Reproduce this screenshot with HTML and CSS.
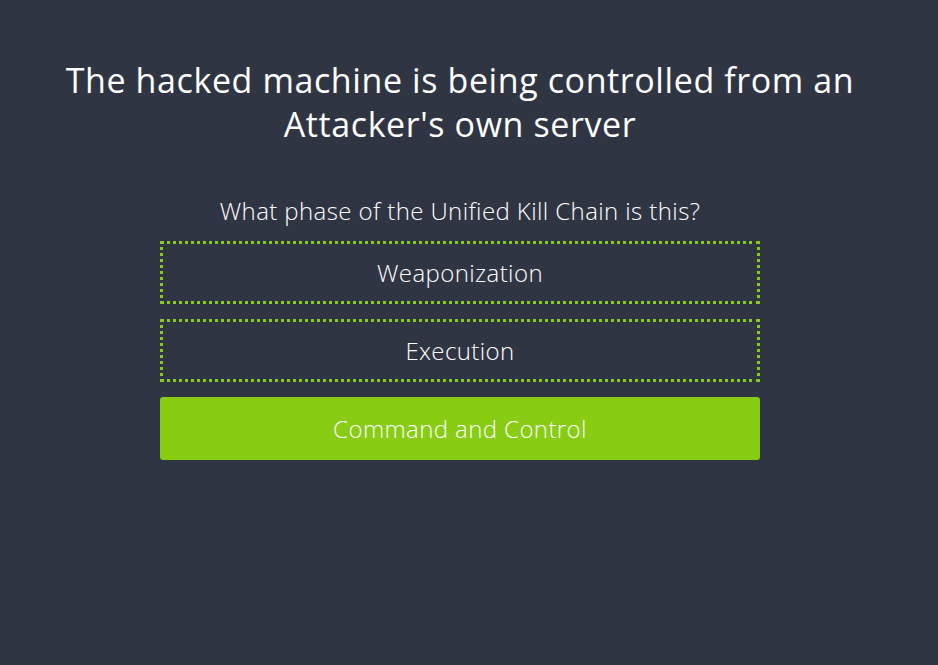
FILE: index.html
```html
<!DOCTYPE html>
<html lang="en">
    <head>
        <meta charset="UTF-8" />
        <title>Unified Kill Chain</title>
        <link rel="stylesheet" href="styles.css">
    </head>
    <body>
        <div class="page">
            <!-- Сценарий -->
            <h1 class="scenario">The hacked machine is being controlled from an Attacker's own server</h1>

            <!-- Вопрос и варианты -->
            <div class="quiz">
                <p class="question">What phase of the Unified Kill Chain is this?</p>
                <button class="answer">Weaponization</button>
                <button class="answer">Execution</button>
                <button class="answer selected">Command and Control</button>
            </div>
        </div>
    </body>
</html>
```

FILE: styles.css
```css
* {
    margin: 0;
    padding: 0;
    box-sizing: border-box;
    font-family: 'Open Sans', sans-serif;
}

body {
    background-color: #303544;
    color: white;
}

.page {
    width: 920px;
    min-height: 665px;
    padding-top: 58px;
    text-align: center;
}

/* Заголовок */
.scenario {
    font-size: 34px;
    font-weight: 400;
    line-height: 44px;
    letter-spacing: 0.6px;
    padding: 0 40px;
}

/* Вопрос */
.quiz {
    width: 600px;
    margin: 50px auto 0;
    display: flex;
    flex-direction: column;
    gap: 15px;
}

.question {
    font-size: 24px;
    font-weight: 300;
    line-height: 30px;
    letter-spacing: 0.4px;
    margin-bottom: 0;
}

/* Варианты ответа */
.answer {
    height: 63px;
    background-color: transparent;
    border: 3px dotted #88cc14;
    color: white;
    font-size: 24px;
    font-weight: 300;
    letter-spacing: 0.4px;
    cursor: pointer;
}

.selected {
    background-color: #88cc14;
    border: none;
    border-radius: 3px;
}
```
